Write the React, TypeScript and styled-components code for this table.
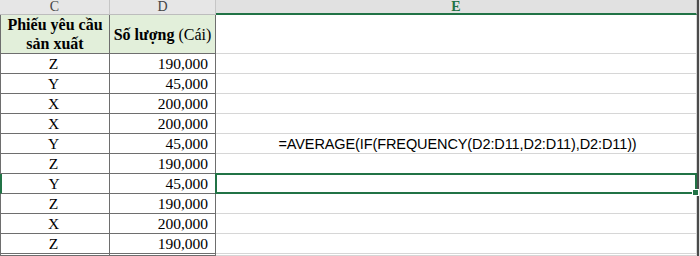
import React from "react";
import styled, { createGlobalStyle, css } from "styled-components";

const Global = createGlobalStyle`
  html, body { margin: 0; padding: 0; background: #ffffff; }
  body { width: 700px; height: 256px; overflow: hidden; }
`;

const GREEN = "#217346";
const DARK = "#6e6e6e";
const LIGHT = "#d6d6d6";

const Sheet = styled.div`
  display: grid;
  grid-template-columns: 110px 106px 481px 3px;
  grid-template-rows: 15px 39px repeat(10, 20px) 2px;
  width: 700px;
  height: 256px;
  font-family: "Liberation Serif", "Times New Roman", serif;
  color: #000;
`;

const ColHead = styled.div<{ $active?: boolean }>`
  display: flex;
  align-items: center;
  justify-content: center;
  background: ${(p) => (p.$active ? "#e1e1e1" : "#e6e6e6")};
  border-right: 1px solid #c6c6c6;
  border-bottom: ${(p) => (p.$active ? `2px solid ${GREEN}` : "1px solid #bdbdbd")};
  box-sizing: border-box;
  font-size: 14px;
  line-height: 1;
  color: ${(p) => (p.$active ? GREEN : "#444")};
  font-weight: ${(p) => (p.$active ? 700 : 400)};
  padding-top: ${(p) => (p.$active ? 1 : 0)}px;
`;

const Edge = styled.div`
  background: #4a4a4a;
  border-right: 1px solid #e0e0e0;
  box-sizing: border-box;
`;

const Cell = styled.div<{
  $align?: "left" | "center" | "right";
  $head?: boolean;
  $table?: boolean;
  $first?: boolean;
  $leftMark?: boolean;
}>`
  position: relative;
  display: flex;
  align-items: center;
  justify-content: ${(p) =>
    p.$align === "right" ? "flex-end" : p.$align === "left" ? "flex-start" : "center"};
  text-align: center;
  box-sizing: border-box;
  padding: ${(p) => (p.$head ? "0 2px" : "0 7px 0 4px")};
  font-size: 15.5px;
  line-height: 18px;
  white-space: ${(p) => (p.$head ? "nowrap" : "normal")};
  background: ${(p) => (p.$head ? "#e2efda" : "#ffffff")};
  border-bottom: 1px solid ${(p) => (p.$table ? DARK : LIGHT)};
  border-right: 1px solid ${(p) => (p.$table ? DARK : LIGHT)};
  ${(p) =>
    p.$first &&
    css`
      border-left: ${p.$leftMark ? `2px solid ${GREEN}` : `1px solid ${DARK}`};
    `}
`;

const HeadText = styled.span`
  font-weight: 700;
  font-size: 16px;
  line-height: 19px;
`;

const Plain = styled.span`
  font-weight: 400;
`;

const Formula = styled.span`
  font-family: "Liberation Sans", Arial, sans-serif;
  font-size: 14.5px;
  letter-spacing: -0.1px;
  padding-top: 1px;
  padding-left: 6px;
`;

const Selected = styled(Cell)`
  &::after {
    content: "";
    position: absolute;
    left: -1px;
    top: -1px;
    right: -1px;
    bottom: -1px;
    border: 2px solid ${GREEN};
    pointer-events: none;
  }
`;

const Handle = styled.span`
  position: absolute;
  right: -3px;
  bottom: -3px;
  width: 5px;
  height: 5px;
  background: ${GREEN};
  border: 1px solid #fff;
  z-index: 2;
`;

const rows: [string, string][] = [
  ["Z", "190,000"],
  ["Y", "45,000"],
  ["X", "200,000"],
  ["X", "200,000"],
  ["Y", "45,000"],
  ["Z", "190,000"],
  ["Y", "45,000"],
  ["Z", "190,000"],
  ["X", "200,000"],
  ["Z", "190,000"],
];

export default function App() {
  return (
    <>
      <Global />
      <Sheet>
        <ColHead>C</ColHead>
        <ColHead>D</ColHead>
        <ColHead $active>E</ColHead>
        <Edge />

        <Cell $head $table $first>
          <HeadText>
            Phiếu yêu cầu
            <br />
            sản xuất
          </HeadText>
        </Cell>
        <Cell $head $table>
          <HeadText>
            Số lượng <Plain>(Cái)</Plain>
          </HeadText>
        </Cell>
        <Cell />
        <Edge />

        {rows.map(([k, v], i) => {
          const sel = i === 6;
          const E = sel ? Selected : Cell;
          return (
            <React.Fragment key={i}>
              <Cell $table $first $leftMark={sel}>
                {k}
              </Cell>
              <Cell $table $align="right">
                {v}
              </Cell>
              <E>
                {i === 4 && <Formula>=AVERAGE(IF(FREQUENCY(D2:D11,D2:D11),D2:D11))</Formula>}
                {sel && <Handle />}
              </E>
              <Edge />
            </React.Fragment>
          );
        })}
        <Cell $table $first />
        <Cell $table />
        <Cell />
        <Edge />
      </Sheet>
    </>
  );
}
